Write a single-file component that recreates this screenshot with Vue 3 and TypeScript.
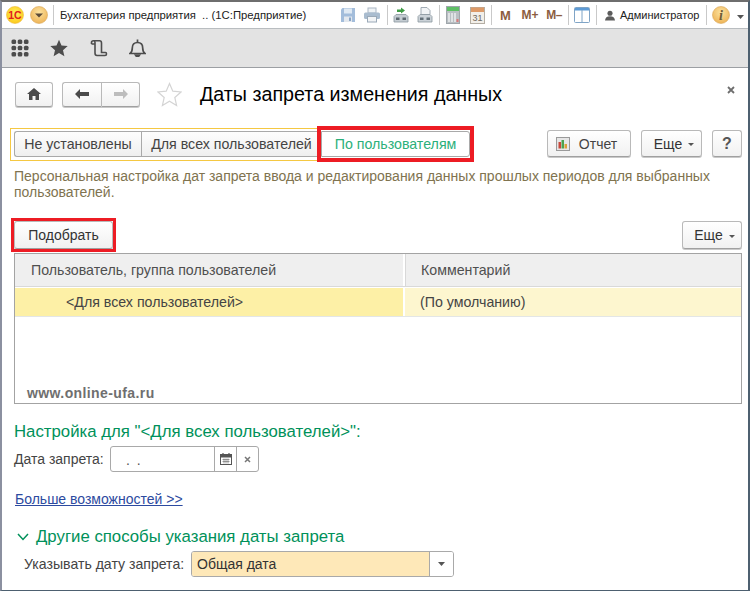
<script setup lang="ts">
const gridDots: { x: number; y: number }[] = []
for (let r = 0; r < 3; r++) {
  for (let c = 0; c < 3; c++) {
    gridDots.push({ x: 0.5 + c * 6.2, y: 0.5 + r * 6.2 })
  }
}
</script>

<template>
  <div class="window">
    <header class="titlebar">
      <span class="slot logo-slot">
        <svg width="18" height="18" viewBox="0 0 18 18">
          <defs>
            <radialGradient id="yl" cx="50%" cy="40%" r="60%">
              <stop offset="0" stop-color="#fff35c" />
              <stop offset="1" stop-color="#fbc81c" />
            </radialGradient>
          </defs>
          <circle cx="9" cy="9" r="8.5" fill="url(#yl)" stroke="#efba3a" stroke-width="0.6" />
          <text x="9" y="12.6" text-anchor="middle" font-size="10.5" font-weight="700" fill="#e0201c" font-family="Liberation Sans">1С</text>
        </svg>
      </span>
      <span class="slot menu-slot">
        <svg width="18" height="18" viewBox="0 0 18 18">
          <defs>
            <radialGradient id="or" cx="50%" cy="35%" r="65%">
              <stop offset="0" stop-color="#fbe2a0" />
              <stop offset="1" stop-color="#eeb457" />
            </radialGradient>
          </defs>
          <circle cx="9" cy="9" r="8.5" fill="url(#or)" stroke="#d9a657" stroke-width="0.6" />
          <path d="M5 7.5h8l-4 4z" fill="#5a4a38" />
        </svg>
      </span>
      <span class="vsep first-sep"></span>
      <span class="app-title">Бухгалтерия предприятия &nbsp;.. (1С:Предприятие)</span>

      <span class="slot s24">
        <svg width="16" height="16" viewBox="0 0 16 16">
          <path d="M1 2.5 2.5 1H15v14H1z" fill="#a3bddb" />
          <rect x="4" y="1.500" width="8" height="5" fill="#dfe9f3" />
          <rect x="4" y="9.500" width="8" height="5.500" fill="#e3e8ee" />
          <rect x="9" y="10.500" width="2" height="3.500" fill="#8aa5c6" />
        </svg>
      </span>
      <span class="slot s24">
        <svg width="18" height="16" viewBox="0 0 18 16">
          <rect x="5" y="1" width="8" height="5" fill="#eef2f5" stroke="#a9b6c3" />
          <rect x="1" y="5.500" width="16" height="6.500" rx="1.500" fill="#a9bccf" />
          <rect x="4.500" y="9.500" width="9" height="5.500" fill="#f2f4f6" stroke="#9aa9b8" />
        </svg>
      </span>
      <span class="vsep s6"></span>
      <span class="slot s22">
        <svg width="18" height="18" viewBox="0 0 18 18">
          <path d="M9 1.500l4 3-4 3V6H5V3.500h4z" fill="#3f9c46" />
          <path d="M2 10.500 4 8.500h10l2 2V16H2z" fill="#c4ccd2" stroke="#8c979f" stroke-width="0.800" />
          <rect x="4" y="11.500" width="3.500" height="2.500" fill="#5d6870" />
          <rect x="10.500" y="11.500" width="3.500" height="2.500" fill="#5d6870" />
        </svg>
      </span>
      <span class="slot s25">
        <svg width="18" height="18" viewBox="0 0 18 18">
          <path d="M5 1.500h6l3 3v4H5z" fill="#f2f4f6" stroke="#97a3ad" stroke-width="0.900" />
          <path d="M2 10.500 4 8.500h10l2 2V16H2z" fill="#cbd2d8" stroke="#8c979f" stroke-width="0.800" />
          <rect x="4" y="11.500" width="3.500" height="2.500" fill="#65717a" />
          <rect x="10.500" y="11.500" width="3.500" height="2.500" fill="#65717a" />
        </svg>
      </span>
      <span class="vsep s4"></span>
      <span class="slot s24">
        <svg width="14" height="18" viewBox="0 0 14 18">
          <rect x="0.500" y="0.500" width="13" height="17" fill="#b9bfc3" stroke="#9fa6ab" />
          <rect x="1" y="1" width="12" height="4" fill="#5fbf66" />
          <path d="M3 7v9M6 7v9M9 7v9" stroke="#f0f1f2" stroke-width="1.400" />
          <rect x="10.500" y="13" width="2" height="3" fill="#d97a7a" />
        </svg>
      </span>
      <span class="slot s24">
        <svg width="15" height="18" viewBox="0 0 15 18">
          <rect x="0.500" y="1.500" width="14" height="16" fill="#f2efe9" stroke="#b4aea4" />
          <rect x="1" y="1.500" width="13" height="4.500" fill="#dd9a68" />
          <text x="7.500" y="15" text-anchor="middle" font-size="9" fill="#6f6a62" font-family="Liberation Sans">31</text>
        </svg>
      </span>
      <span class="vsep s4"></span>
      <span class="mem w25 big">M</span>
      <span class="mem w24">M+</span>
      <span class="mem w24 tight">M–</span>
      <span class="vsep s4"></span>
      <span class="slot s24">
        <svg width="16" height="16" viewBox="0 0 16 16">
          <rect x="0.500" y="0.500" width="15" height="15" rx="1" fill="#fff" stroke="#7fa4c6" />
          <rect x="1" y="1" width="14" height="2.500" fill="#5d9bd6" />
          <path d="M8 3v12" stroke="#7fa4c6" />
        </svg>
      </span>
      <span class="vsep s4"></span>
      <span class="slot user-slot">
        <svg width="11" height="11" viewBox="0 0 11 11">
          <circle cx="5.500" cy="3" r="2.800" fill="#5c5c5c" />
          <path d="M0 11c.3-3.400 2-4.800 5.500-4.800S10.700 7.600 11 11z" fill="#5c5c5c" />
        </svg>
      </span>
      <span class="user-name">Администратор</span>
      <span class="vsep s6 after-user"></span>
      <span class="slot info-slot">
        <svg width="18" height="18" viewBox="0 0 18 18">
          <circle cx="9" cy="9" r="8.500" fill="url(#or)" stroke="#d9a657" stroke-width="0.600" />
          <text x="9" y="14" text-anchor="middle" font-size="14" font-weight="700" font-style="italic" fill="#6d5a34" font-family="Liberation Serif">i</text>
        </svg>
      </span>
      <svg class="info-arrow" width="7" height="4" viewBox="0 0 7 4"><path d="M0 0h7L3.500 4z" fill="#555" /></svg>
    </header>

    <nav class="navbar">
      <svg class="nav-icon grid-icon" width="18" height="18" viewBox="0 0 18 18">
        <rect v-for="(d, i) in gridDots" :key="i" :x="d.x" :y="d.y" width="4.600" height="4.600" rx="1.500" fill="#4d4d4d" />
      </svg>
      <svg class="nav-icon star-icon" width="18" height="18" viewBox="0 0 18 18">
        <path d="M9 .8l2.500 5.700 6.200.6-4.700 4.100 1.400 6.100L9 14.100l-5.400 3.200L5 11.200.3 7.100l6.200-.6z" fill="#4d4d4d" />
      </svg>
      <svg class="nav-icon scroll-icon" width="18" height="18" viewBox="0 0 18 18" fill="none" stroke="#4d4d4d" stroke-width="1.600">
        <path d="M1.500 5V3.500Q1.500 1.800 3.500 1.800H9.500Q11.500 1.800 11.500 4V13.500H15.500Q16.500 13.500 16.500 15Q16.500 16.500 15 16.500H7Q5 16.500 5 14V3.500Q5 1.800 3.500 1.800M1.500 5H5" />
      </svg>
      <svg class="nav-icon bell-icon" width="17" height="18" viewBox="0 0 17 18" fill="none" stroke="#4d4d4d" stroke-width="1.700">
        <path d="M1 14.500c1.500-1 2.300-2.500 2.300-5.500 0-3.500 2-5.500 5.200-5.500s5.200 2 5.200 5.500c0 3 .8 4.500 2.300 5.500z" />
        <path d="M8.500 0.500v3" />
        <path d="M6.500 16h4l-1 1.500h-2z" fill="#4d4d4d" />
      </svg>
    </nav>

    <main class="content">
      <div class="head-row">
        <button class="btn home-btn">
          <svg width="14" height="12" viewBox="0 0 14 12"><path d="M7 0l7 6h-2v6H8.500V8h-3v4H2V6H0z" fill="#4a4a4a" /></svg>
        </button>
        <div class="btn-group">
          <button class="btn seg">
            <svg width="14" height="10" viewBox="0 0 14 10"><path d="M0 5l5-5v3h9v4H5v3z" fill="#4a4a4a" /></svg>
          </button>
          <button class="btn seg">
            <svg width="14" height="10" viewBox="0 0 14 10"><path d="M14 5L9 0v3H0v4h9v3z" fill="#bdbdbd" /></svg>
          </button>
        </div>
        <svg class="fav-star" width="25" height="25" viewBox="0 0 25 25">
          <path d="M12.500 1.500l3.300 7.700 8.200.8-6.200 5.500 1.800 8.100-7.100-4.300-7.100 4.300 1.800-8.100L1 10l8.200-.8z" fill="#fff" stroke="#d4d4d4" stroke-width="1.200" />
        </svg>
        <h1 class="page-title">Даты запрета изменения данных</h1>
        <svg class="close-x" width="8" height="8" viewBox="0 0 8 8"><path d="M1 1l6 6M7 1L1 7" stroke="#6e6e6e" stroke-width="1.800" /></svg>
      </div>

      <div class="mode-row">
        <div class="tabs-frame">
          <button class="tab tab-a">Не установлены</button>
          <button class="tab tab-b">Для всех пользователей</button>
          <button class="tab tab-active">По пользователям</button>
        </div>
        <div class="mode-actions">
          <button class="btn action report-btn">
            <svg width="14" height="14" viewBox="0 0 14 14">
              <rect x="0.500" y="0.500" width="13" height="13" fill="#e6e6e6" stroke="#9a9a9a" />
              <rect x="2.500" y="5" width="2.500" height="6.500" fill="#c9473a" />
              <rect x="5.500" y="3" width="2.500" height="8.500" fill="#4aa34f" />
              <rect x="8.500" y="7" width="2.500" height="4.500" fill="#d9a03a" />
            </svg>
            <span>Отчет</span>
          </button>
          <button class="btn action more-btn">Еще <i class="caret"></i></button>
          <button class="btn action help-btn">?</button>
        </div>
      </div>

      <p class="desc">Персональная настройка дат запрета ввода и редактирования данных прошлых периодов для выбранных пользователей.</p>

      <div class="list-bar">
        <button class="btn pick-btn">Подобрать</button>
        <button class="btn more-list">Еще <i class="caret"></i></button>
      </div>

      <section class="table">
        <div class="t-head">
          <div class="c1 hcell">Пользователь, группа пользователей</div>
          <div class="c2 hcell">Комментарий</div>
        </div>
        <div class="t-row">
          <div class="c1 rcell-1">&lt;Для всех пользователей&gt;</div>
          <div class="c2 rcell-2">(По умолчанию)</div>
        </div>
        <div class="watermark">www.online-ufa.ru</div>
      </section>

      <h2 class="section-title">Настройка для "&lt;Для всех пользователей&gt;":</h2>

      <div class="date-row">
        <label class="date-label">Дата запрета:</label>
        <div class="date-input">
          <span class="date-mask">. .</span>
          <span class="date-btn cal-btn">
            <svg width="12" height="12" viewBox="0 0 12 12">
              <rect x="0.500" y="1.500" width="11" height="10" fill="#fff" stroke="#555" />
              <rect x="0.500" y="1.500" width="11" height="3" fill="#555" />
              <path d="M3 0v2M9 0v2" stroke="#555" stroke-width="1.200" />
              <path d="M2.500 6.500h7M2.500 8.500h7M4 5.500v5M6 5.500v5M8 5.500v5" stroke="#777" stroke-width="0.700" />
            </svg>
          </span>
          <span class="date-btn clr-btn">
            <svg width="7" height="7" viewBox="0 0 7 7"><path d="M1 1l5 5M6 1L1 6" stroke="#777" stroke-width="1.500" /></svg>
          </span>
        </div>
      </div>

      <a class="more-link" href="#">Больше возможностей &gt;&gt;</a>

      <div class="group-title">
        <svg width="12" height="8" viewBox="0 0 12 8"><path d="M1 1l5 5.500L11 1" fill="none" stroke="#00915a" stroke-width="1.500" /></svg>
        <span>Другие способы указания даты запрета</span>
      </div>

      <div class="select-row">
        <label class="select-label">Указывать дату запрета:</label>
        <div class="select-box">
          <span class="select-value">Общая дата</span>
          <span class="select-arrow">
            <svg width="7" height="4" viewBox="0 0 7 4"><path d="M0 0h7L3.500 4z" fill="#555" /></svg>
          </span>
        </div>
      </div>
    </main>
  </div>
</template>

<style>
html, body { margin: 0; padding: 0; background: #fff; }
</style>

<style scoped>
.window {
  width: 750px;
  height: 591px;
  box-sizing: border-box;
  border-top: 2px solid #6e6e6e;
  border-left: 2px solid #8b90a0;
  border-right: 2px solid #4d6070;
  border-bottom: 1px solid #4d6070;
  display: flex;
  flex-direction: column;
  overflow: hidden;
  font-family: "Liberation Sans", Arial, sans-serif;
  color: #333;
  background: #fff;
}

/* Title bar */
.titlebar {
  height: 26px;
  border-bottom: 1px solid #b9bdc0;
  display: flex;
  align-items: center;
  flex: none;
  background: #fff;
}
.slot { display: flex; align-items: center; justify-content: center; flex: none; }
.logo-slot { width: 18px; margin-left: 4px; }
.menu-slot { width: 18px; margin-left: 6px; }
.vsep { flex: none; display: flex; justify-content: center; height: 20px; position: relative; }
.vsep::after { content: ""; width: 1px; height: 100%; background: #c9c9c9; }
.first-sep { width: 1px; margin-left: 5px; }
.s6 { width: 6px; }
.s4 { width: 4px; }
.s22 { width: 22px; }
.s24 { width: 24px; }
.s25 { width: 25px; }
.app-title {
  width: 276px;
  margin-left: 6px;
  flex: none;
  font-size: 11.3px;
  color: #222;
  white-space: pre;
}
.mem {
  flex: none;
  text-align: center;
  font-size: 12px;
  font-weight: 700;
  color: #8c5d3f;
}
.big { font-size: 13px; }
.tight { letter-spacing: -0.6px; }
.w25 { width: 25px; }
.w24 { width: 24px; }
.user-slot { width: 10px; margin-left: 7px; }
.user-name { flex: none; width: 88px; margin-left: 5px; font-size: 11px; color: #222; }
.after-user { margin-left: -5px; }
.info-slot { width: 18px; margin-left: 3px; }
.info-arrow { flex: none; margin-left: 7px; margin-top: 3px; }

/* Nav bar */
.navbar {
  height: 38px;
  flex: none;
  background: #e3e3e3;
  border-bottom: 1px solid #9c9fa3;
  display: flex;
  align-items: center;
}
.nav-icon { flex: none; display: block; }
.grid-icon { margin-left: 9px; }
.star-icon { margin-left: 21px; }
.scroll-icon { margin-left: 22px; }
.bell-icon { margin-left: 21px; }

/* Main */
.content {
  flex: 1;
  min-height: 0;
  padding: 13px 6px 0 12px;
  display: flex;
  flex-direction: column;
  align-items: stretch;
  font-size: 14px;
}
.btn {
  font-family: inherit;
  box-sizing: border-box;
  background: linear-gradient(#ffffff, #f1f1f1);
  border: 1px solid #b9b9b9;
  border-bottom-color: #a0a0a0;
  border-radius: 3px;
  box-shadow: 0 1px 0 #c9c9c9;
  padding: 0;
  color: #333;
  font-size: 14px;
  display: flex;
  align-items: center;
  justify-content: center;
}
.head-row { display: flex; align-items: center; height: 26px; flex: none; }
.home-btn { width: 38px; height: 25px; margin-left: 1px; }
.btn-group { display: flex; margin-left: 9px; }
.seg { width: 39px; height: 25px; }
.seg:first-child { border-radius: 3px 0 0 3px; border-right: none; }
.seg:last-child { border-radius: 0 3px 3px 0; }
.fav-star { margin-left: 17px; flex: none; }
.page-title {
  margin: 0 0 0 18px;
  font-size: 19.7px;
  font-weight: 400;
  color: #000;
  white-space: nowrap;
}
.close-x { margin-left: auto; margin-right: 7px; margin-top: -9px; flex: none; }

.mode-row {
  margin-top: 21px;
  display: flex;
  justify-content: space-between;
  align-items: flex-start;
  flex: none;
}
.tabs-frame {
  margin-left: -4px;
  box-sizing: border-box;
  border: 1px solid #f5c842;
  padding: 2px 3px;
  height: 33px;
  display: flex;
}
.tab {
  font-family: inherit;
  font-size: 14.2px;
  height: 26px;
  box-sizing: border-box;
  padding: 0;
  background: linear-gradient(#fdfdfd, #efefef);
  border: 1px solid #a9a9a9;
  color: #444;
}
.tab-a { width: 127px; border-radius: 3px 0 0 3px; border-right: none; }
.tab-b { width: 180px; border-right: none; }
.tab-active {
  width: 149px;
  background: #fff;
  color: #2bb07a;
  border-radius: 0 3px 3px 0;
  position: relative;
}
.tab-active::after {
  content: "";
  position: absolute;
  top: -6px;
  bottom: -6px;
  left: -5px;
  right: -5px;
  border: 4px solid #ed1c24;
}
.mode-actions { display: flex; gap: 10px; margin-top: 2px; }
.action { height: 27px; font-size: 14px; }
.report-btn { width: 84px; gap: 9px; color: #444; padding-right: 5px; }
.more-btn { width: 61px; gap: 6px; padding-left: 5px; }
.help-btn { width: 30px; font-size: 16px; font-weight: 700; color: #555; }
.caret {
  display: inline-block;
  width: 0;
  height: 0;
  border-left: 3px solid transparent;
  border-right: 3px solid transparent;
  border-top: 3px solid #555;
  margin-top: 2px;
}

.desc {
  margin: 7px 0 0;
  font-size: 14px;
  line-height: 16px;
  color: #80734f;
  flex: none;
}

.list-bar {
  margin-top: 21px;
  height: 28px;
  display: flex;
  justify-content: space-between;
  flex: none;
}
.pick-btn { width: 99px; height: 28px; position: relative; }
.pick-btn::after {
  content: "";
  position: absolute;
  inset: -4px;
  border: 3px solid #ed1c24;
}
.more-list { width: 60px; height: 28px; gap: 6px; padding-left: 5px; }

.table {
  margin-top: 4px;
  height: 151px;
  box-sizing: border-box;
  border: 1px solid #a3a3a3;
  display: flex;
  flex-direction: column;
  flex: none;
  font-size: 14.2px;
}
.t-head {
  height: 32px;
  display: flex;
  background: #efefef;
  border-bottom: 1px solid #d9d9d9;
  flex: none;
}
.t-row {
  margin-top: 1px;
  height: 28px;
  display: flex;
  border-bottom: 1px solid #e3e6e6;
  flex: none;
}
.c1 { width: 388px; flex: none; box-sizing: border-box; display: flex; align-items: center; }
.c2 { flex: 1; box-sizing: border-box; display: flex; align-items: center; border-left: 2px solid #fff; }
.hcell { color: #4f4f4f; }
.t-head .c1 { padding-left: 16px; }
.t-head .c2 { padding-left: 16px; border-left: 2px solid #fff; box-shadow: inset 1px 0 0 #d8d8d8; }
.rcell-1 { background: #fdf0a6; padding-left: 51px; color: #444; }
.rcell-2 { background: #fdf6cf; padding-left: 15px; color: #444; }
.watermark {
  margin-top: auto;
  padding: 0 0 1px 12px;
  font-size: 14px;
  letter-spacing: 0.4px;
  font-weight: 700;
  color: #6f6f6f;
  line-height: 17px;
}

.section-title {
  margin: 19px 0 0;
  font-size: 16.8px;
  line-height: 18px;
  font-weight: 400;
  color: #00915a;
  flex: none;
}
.date-row { margin-top: 5px; display: flex; align-items: center; height: 26px; flex: none; }
.date-label { width: 96px; flex: none; color: #444; }
.date-input {
  width: 149px;
  height: 26px;
  box-sizing: border-box;
  border: 1px solid #a9a9a9;
  border-radius: 3px;
  display: flex;
  align-items: center;
}
.date-mask { flex: 1; padding-left: 15px; word-spacing: 3px; color: #555; padding-top: 2px; }
.date-btn { height: 100%; display: flex; align-items: center; justify-content: center; border-left: 1px solid #a9a9a9; box-sizing: border-box; flex: none; }
.cal-btn { width: 22px; }
.clr-btn { width: 22px; }

.more-link {
  margin: 19px 0 0 1px;
  font-size: 14px;
  line-height: 16px;
  color: #2c4aa0;
  text-decoration: underline;
  align-self: flex-start;
}
.group-title {
  margin: 21px 0 0 3px;
  display: flex;
  align-items: center;
  gap: 7px;
  font-size: 16.8px;
  line-height: 18px;
  color: #00915a;
  flex: none;
}
.select-row { margin-top: 5px; display: flex; align-items: center; height: 26px; flex: none; }
.select-label { margin-left: 10px; width: 167px; flex: none; color: #444; font-size: 14.1px; }
.select-box {
  width: 263px;
  height: 26px;
  box-sizing: border-box;
  border: 1px solid #a9a9a9;
  border-radius: 3px;
  display: flex;
  align-items: stretch;
  overflow: hidden;
}
.select-value {
  flex: 1;
  background: #fee8b8;
  padding-left: 5px;
  display: flex;
  align-items: center;
  color: #333;
}
.select-arrow {
  width: 23px;
  flex: none;
  border-left: 1px solid #a9a9a9;
  display: flex;
  align-items: center;
  justify-content: center;
  background: #fff;
}
</style>
